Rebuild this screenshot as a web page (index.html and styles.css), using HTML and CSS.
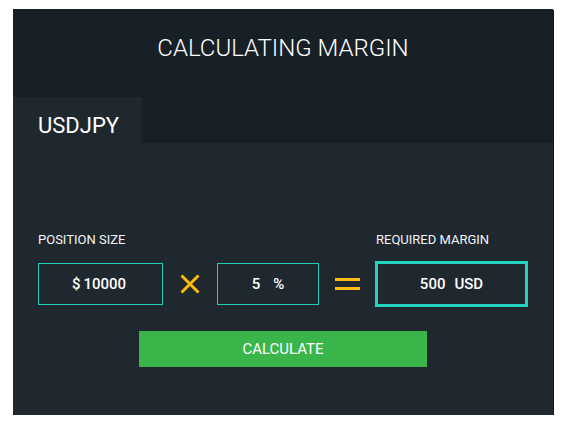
FILE: index.html
```html
<!DOCTYPE html>
<html>
<head>
<meta charset="utf-8">
<link rel="stylesheet" href="styles.css">
</head>
<body>
<div class="calc">
  <div class="header">
    <h1 class="title">CALCULATING MARGIN</h1>
    <div class="tab">USDJPY</div>
  </div>
  <div class="content">
    <div class="grid">
      <div class="label l1">POSITION SIZE</div>
      <div class="label l3">REQUIRED MARGIN</div>
      <div class="box b1"><span>$</span><span>10000</span></div>
      <div class="op">
        <svg width="20" height="20" viewBox="0 0 20 20"><path d="M1.5 1.5 L18.5 18.5 M18.5 1.5 L1.5 18.5" stroke="#fdbb0f" stroke-width="3" fill="none"/></svg>
      </div>
      <div class="box b2"><span>5</span><span class="unit">%</span></div>
      <div class="op">
        <svg width="25" height="12" viewBox="0 0 25 12"><rect x="0" y="0" width="25" height="3" fill="#fdbb0f"/><rect x="0" y="9" width="25" height="3" fill="#fdbb0f"/></svg>
      </div>
      <div class="box result"><span>500</span><span class="unit2">USD</span></div>
    </div>
    <button class="calc-btn">CALCULATE</button>
  </div>
</div>
</body>
</html>
```
FILE: styles.css
```css
* { box-sizing: border-box; }
html, body { margin: 0; padding: 0; background: #ffffff; }
body { font-family: Roboto, "Liberation Sans", sans-serif; color: #ffffff; }

.calc {
  margin: 9px 0 0 13px;
  width: 540px;
  height: 406px;
  display: flex;
  flex-direction: column;
  box-shadow: 1px 1px 0 #10161a;
}

.header {
  background: #172026;
  height: 134px;
  display: flex;
  flex-direction: column;
}

.title {
  margin: 0;
  padding-top: 25px;
  font-size: 24px;
  line-height: 28px;
  font-weight: 300;
  text-align: center;
  color: #ffffff;
}

.tab {
  margin-top: auto;
  width: 129px;
  height: 46px;
  background: #20282f;
  padding: 17px 0 0 25px;
  font-size: 22px;
  line-height: 24px;
  font-weight: 400;
}

.content {
  flex: 1;
  background: #20282f;
  padding: 89px 0 0 25px;
}

.grid {
  display: grid;
  grid-template-columns: 125px 54px 102px 56px 153px;
  grid-template-rows: 15px 46px;
  row-gap: 14px;
  align-items: center;
}

.label {
  font-size: 13px;
  line-height: 15px;
  font-weight: 400;
  color: #f2f4f5;
}
.l1 { grid-column: 1 / 4; grid-row: 1; }
.l3 { grid-column: 5; grid-row: 1; padding-left: 1px; }

.box {
  grid-row: 2;
  height: 42px;
  border: 1px solid #1fcfb8;
  display: flex;
  align-items: center;
  justify-content: center;
  gap: 3px;
  font-size: 15px;
  font-weight: 500;
  line-height: 18px;
}
.b1 { padding-right: 3px; }
.b2 .unit { margin-left: 10px; }

.op {
  grid-row: 2;
  display: flex;
  align-items: center;
  justify-content: center;
}
.op svg { display: block; }

.result {
  height: 46px;
  border: 3px solid #23d2bd;
}
.result .unit2 { margin-left: 6px; }

.calc-btn {
  display: block;
  margin: 24px 0 0 101px;
  width: 288px;
  height: 36px;
  border: none;
  background: #3ab54a;
  color: #ffffff;
  font-family: Roboto, "Liberation Sans", sans-serif;
  font-size: 15px;
  font-weight: 400;
  padding: 0;
}
```
